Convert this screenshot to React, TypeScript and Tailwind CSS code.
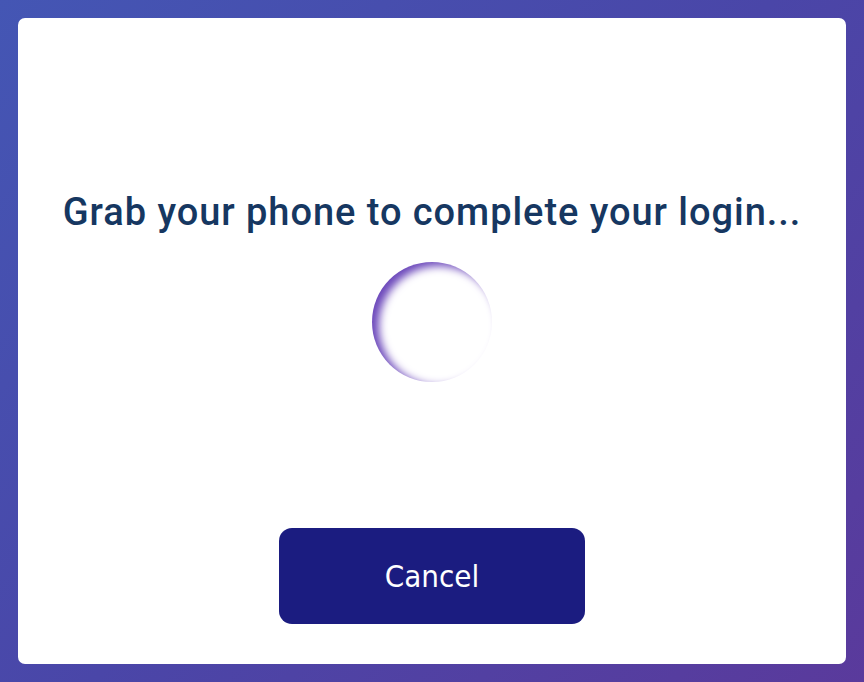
import React from "react";

export default function App() {
  return (
    <div className="w-[864px] h-[682px] p-[18px] bg-[linear-gradient(135deg,#4456b4_0%,#4a46a8_50%,#5a3a9c_100%)]">
      <div className="w-full h-full bg-white rounded-[7px] flex flex-col items-center">
        <h1
          className="mt-[172px] text-[#163761] text-[38px] leading-[44px] font-medium tracking-[0.95px]"
          style={{ fontFamily: "Roboto, sans-serif" }}
        >
          Grab your phone to complete your login...
        </h1>
        <div className="mt-[28px] w-[120px] h-[120px] rounded-full bg-white shadow-[inset_7px_4px_9px_#6c48bb]" />
        <button
          className="mt-[146px] w-[306px] h-[96px] rounded-[13px] bg-[#1b1c80] text-white text-[31px]"
          style={{ fontFamily: "'DejaVu Sans Condensed', sans-serif" }}
        >
          Cancel
        </button>
      </div>
    </div>
  );
}
